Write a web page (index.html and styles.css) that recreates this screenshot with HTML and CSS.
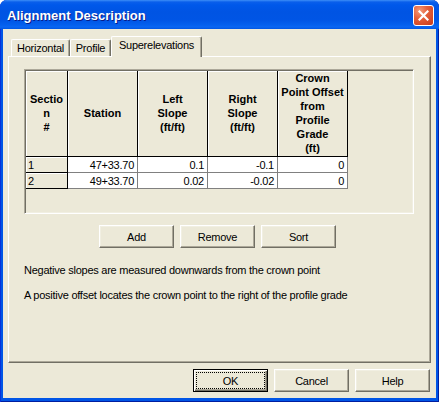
FILE: index.html
```html
<!DOCTYPE html>
<html>
<head>
<meta charset="utf-8">
<title>Alignment Description</title>
<link rel="stylesheet" href="styles.css">
</head>
<body>
<div class="window">
  <div class="titlebar">
    <span class="title">Alignment Description</span>
    <span class="close"><svg width="11" height="11" viewBox="0 0 11 11"><path d="M1.5 1.5 L9.5 9.5 M9.5 1.5 L1.5 9.5" stroke="#fff" stroke-width="2.2" stroke-linecap="square"/></svg></span>
  </div>
  <div class="client">
    <div class="tabs">
      <div class="tab tab-h">Horizontal</div>
      <div class="tab tab-p">Profile</div>
      <div class="tab tab-s active">Superelevations</div>
    </div>
    <div class="panel">
      <div class="gridframe">
        <table class="grid">
          <colgroup><col class="c1"><col class="c2"><col class="c2"><col class="c2"><col class="c2"></colgroup>
          <thead>
            <tr>
              <th>Sectio<br>n<br>#</th>
              <th>Station</th>
              <th>Left<br>Slope<br>(ft/ft)</th>
              <th>Right<br>Slope<br>(ft/ft)</th>
              <th>Crown<br>Point Offset<br>from<br>Profile<br>Grade<br>(ft)</th>
            </tr>
          </thead>
          <tbody>
            <tr><td class="rowhead">1</td><td>47+33.70</td><td>0.1</td><td>-0.1</td><td>0</td></tr>
            <tr><td class="rowhead">2</td><td>49+33.70</td><td>0.02</td><td>-0.02</td><td>0</td></tr>
          </tbody>
        </table>
      </div>
      <div class="actions">
        <button class="btn">Add</button>
        <button class="btn">Remove</button>
        <button class="btn">Sort</button>
      </div>
      <p class="note note-first">Negative slopes are measured downwards from the crown point</p>
      <p class="note">A positive offset locates the crown point to the right of the profile grade</p>
    </div>
    <div class="footer">
      <button class="btn default">OK</button>
      <button class="btn">Cancel</button>
      <button class="btn">Help</button>
    </div>
  </div>
</div>
</body>
</html>
```
FILE: styles.css
```css
* { box-sizing: border-box; }
html, body { margin: 0; padding: 0; background: #ffffff; }
body {
  width: 439px; height: 402px; overflow: hidden;
  font-family: "Liberation Sans", Arial, sans-serif;
  font-size: 11px; letter-spacing: -0.25px; color: #000;
}
.window {
  width: 439px; height: 402px;
  display: flex; flex-direction: column;
  background: #0055E6;
  border-radius: 7px 7px 0 0;
  overflow: hidden;
  box-shadow: inset 1px 0 #0831D9, inset -1px 0 #001EA0, inset 0 -1px #001EA0;
}
.titlebar {
  height: 29px; flex: none;
  display: flex; align-items: flex-start;
  background: linear-gradient(to bottom, #3D8EF7 0px, #0A5FEB 2px, #0058EA 5px, #0054E3 12px, #0055E5 20px, #0460EE 25px, #0A66F2 27px, #0055E3 29px);
}
.title {
  margin: 8px 0 0 7px;
  font: bold 13px/15px "Liberation Sans", Arial, sans-serif;
  letter-spacing: 0;
  color: #ffffff;
  text-shadow: 1px 1px 0 #0A1C88;
}
.close {
  margin: 5px 5px 0 auto;
  width: 21px; height: 21px;
  border: 1px solid #ffffff;
  border-radius: 3px;
  background: radial-gradient(circle at 30% 25%, #F39B7A 0%, #E4603B 40%, #C8391A 100%);
  display: flex; align-items: center; justify-content: center;
}
.client {
  flex: 1;
  margin: 0 3px 4px 3px;
  background: #ECE9D8;
  display: flex; flex-direction: column;
}
.tabs {
  height: 27px; flex: none;
  display: flex; align-items: flex-end;
  padding-left: 8px;
}
.tab {
  height: 17px;
  background: #ECE9D8;
  border-left: 1px solid #ffffff;
  border-top: 1px solid #ffffff;
  border-right: 1px solid #716F64;
  box-shadow: inset -1px 0 #ACA899;
  border-radius: 2px 2px 0 0;
  padding-top: 2px;
  line-height: 13px;
  text-align: center;
  white-space: nowrap;
}
.tab-h { width: 59px; }
.tab-p { width: 41px; }
.tab-s { width: 91px; }
.tab.active {
  height: 21px;
  margin-bottom: -1px;
  position: relative; z-index: 1;
}
.panel {
  flex: none;
  height: 307px;
  margin: 0 5px;
  border: 1px solid;
  border-color: #ffffff #716F64 #716F64 #ffffff;
  box-shadow: inset -1px -1px #ACA899;
  padding: 12px 0 0 15px;
  display: flex; flex-direction: column; align-items: flex-start;
}
.gridframe {
  width: 390px; height: 145px;
  border: 1px solid;
  border-color: #ACA899 #ffffff #ffffff #ACA899;
  box-shadow: inset 1px 1px #716F64, inset -1px -1px #F1EFE2;
  padding: 1px;
  background: #ECE9D8;
}
.grid {
  border-collapse: separate;
  border-spacing: 0;
  table-layout: fixed;
  width: 322px;
}
.grid col.c1 { width: 42px; }
.grid col.c2 { width: 70px; }
.grid th {
  height: 86px;
  padding: 0 0 1px 0;
  font-weight: bold;
  letter-spacing: 0;
  line-height: 14px;
  text-align: center;
  vertical-align: middle;
  background: #ECE9D8;
  border-right: 1px solid #000;
  border-bottom: 1px solid #000;
  box-shadow: inset 1px 1px #ffffff;
}
.grid td {
  height: 16px;
  padding: 0 3px 0 2px;
  line-height: 14px;
  text-align: right;
  background: #ffffff;
  border-right: 1px solid #808080;
  border-bottom: 1px solid #808080;
  white-space: nowrap;
}
.grid td.rowhead {
  text-align: left;
  background: #ECE9D8;
  border-right: 1px solid #000;
  border-bottom: 1px solid #000;
  box-shadow: inset 1px 1px #ffffff;
}
.actions {
  margin: 11px 0 0 75px;
  display: flex; gap: 6px;
}
.btn {
  width: 75px; height: 23px;
  margin: 0; padding: 0;
  background: #ECE9D8;
  border: 1px solid;
  border-color: #ffffff #716F64 #716F64 #ffffff;
  box-shadow: inset -1px -1px #ACA899, inset 1px 1px #F1EFE2;
  font: 11px "Liberation Sans", Arial, sans-serif;
  letter-spacing: -0.25px;
  color: #000;
  display: flex; align-items: center; justify-content: center;
}
.btn.default {
  border-color: #000;
  box-shadow: inset 1px 1px #ffffff, inset -1px -1px #716F64, inset -2px -2px #ACA899;
  outline: 1px dotted #000;
  outline-offset: -4px;
}
.note {
  margin: 12px 0 0 0;
  line-height: 13px;
  white-space: nowrap;
}
.note-first { margin-top: 16px; }
.footer {
  margin-top: 6px;
  padding-right: 6px;
  display: flex; justify-content: flex-end; gap: 6px;
}
```
